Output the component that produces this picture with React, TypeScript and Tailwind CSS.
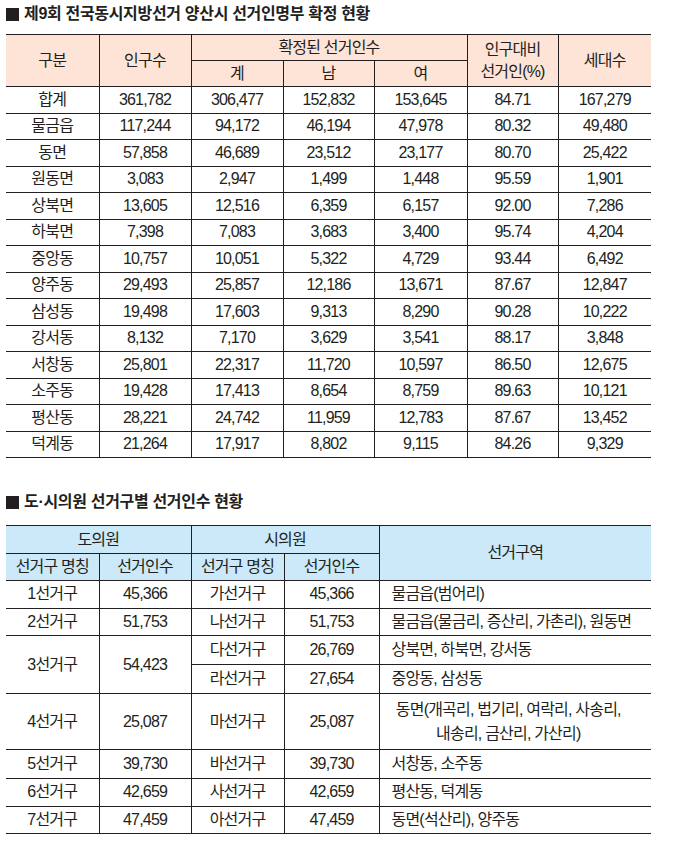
const rows1 = [
  ["합계", "361,782", "306,477", "152,832", "153,645", "84.71", "167,279"],
  ["물금읍", "117,244", "94,172", "46,194", "47,978", "80.32", "49,480"],
  ["동면", "57,858", "46,689", "23,512", "23,177", "80.70", "25,422"],
  ["원동면", "3,083", "2,947", "1,499", "1,448", "95.59", "1,901"],
  ["상북면", "13,605", "12,516", "6,359", "6,157", "92.00", "7,286"],
  ["하북면", "7,398", "7,083", "3,683", "3,400", "95.74", "4,204"],
  ["중앙동", "10,757", "10,051", "5,322", "4,729", "93.44", "6,492"],
  ["양주동", "29,493", "25,857", "12,186", "13,671", "87.67", "12,847"],
  ["삼성동", "19,498", "17,603", "9,313", "8,290", "90.28", "10,222"],
  ["강서동", "8,132", "7,170", "3,629", "3,541", "88.17", "3,848"],
  ["서창동", "25,801", "22,317", "11,720", "10,597", "86.50", "12,675"],
  ["소주동", "19,428", "17,413", "8,654", "8,759", "89.63", "10,121"],
  ["평산동", "28,221", "24,742", "11,959", "12,783", "87.67", "13,452"],
  ["덕계동", "21,264", "17,917", "8,802", "9,115", "84.26", "9,329"],
];

const font = "font-['Liberation_Sans','Noto_Sans_CJK_KR',sans-serif]";
const line = "border-[#231f20]";

function Title({ children }: { children: string }) {
  return (
    <h2 className="flex items-center gap-[5px] text-[16px] font-bold tracking-[-0.02em] text-[#231f20]">
      <span className="inline-block h-[13px] w-[13px] bg-[#231f20]" />
      {children}
    </h2>
  );
}

export default function App() {
  const cell = `border ${line} text-center px-0`;
  return (
    <div className={`${font} min-h-[858px] w-[677px] bg-white pl-[6px] pt-[6px] text-[16px] leading-none text-[#231f20] tracking-[-0.05em]`}>
      <Title>제9회 전국동시지방선거 양산시 선거인명부 확정 현황</Title>
      <table className="mt-[12px] w-[645px] table-fixed border-collapse">
        <colgroup>
          <col className="w-[93px]" />
          <col className="w-[92px]" />
          <col className="w-[92px]" />
          <col className="w-[91px]" />
          <col className="w-[93px]" />
          <col className="w-[91px]" />
          <col className="w-[93px]" />
        </colgroup>
        <thead className="bg-[#fde4d7]">
          <tr className="h-[26px]">
            <th rowSpan={2} className={`${cell} border-l-0 font-normal`}>구분</th>
            <th rowSpan={2} className={`${cell} font-normal`}>인구수</th>
            <th colSpan={3} className={`${cell} font-normal`}>확정된 선거인수</th>
            <th rowSpan={2} className={`${cell} font-normal leading-[22px]`}>
              인구대비
              <br />
              선거인(%)
            </th>
            <th rowSpan={2} className={`${cell} border-r-0 font-normal`}>세대수</th>
          </tr>
          <tr className="h-[26px]">
            <th className={`${cell} font-normal`}>계</th>
            <th className={`${cell} font-normal`}>남</th>
            <th className={`${cell} font-normal`}>여</th>
          </tr>
        </thead>
        <tbody>
          {rows1.map((r) => (
            <tr key={r[0]} className="h-[26.5px]">
              {r.map((v, i) => (
                <td
                  key={i}
                  className={`${cell} ${i === 0 ? "border-l-0" : ""} ${i === 6 ? "border-r-0" : ""}`}
                >
                  {v}
                </td>
              ))}
            </tr>
          ))}
        </tbody>
      </table>

      <div className="mt-[36px]">
        <Title>도·시의원 선거구별 선거인수 현황</Title>
      </div>
      <table className="mt-[15px] w-[645px] table-fixed border-collapse">
        <colgroup>
          <col className="w-[93px]" />
          <col className="w-[92px]" />
          <col className="w-[93px]" />
          <col className="w-[95px]" />
          <col className="w-[272px]" />
        </colgroup>
        <thead className="bg-[#cbe9f9]">
          <tr className="h-[28px]">
            <th colSpan={2} className={`${cell} border-l-0 font-normal`}>도의원</th>
            <th colSpan={2} className={`${cell} font-normal`}>시의원</th>
            <th rowSpan={2} className={`${cell} border-r-0 font-normal`}>선거구역</th>
          </tr>
          <tr className="h-[27px]">
            <th className={`${cell} border-l-0 font-normal`}>선거구 명칭</th>
            <th className={`${cell} font-normal`}>선거인수</th>
            <th className={`${cell} font-normal`}>선거구 명칭</th>
            <th className={`${cell} font-normal`}>선거인수</th>
          </tr>
        </thead>
        <tbody>
          <Row2 a="1선거구" b="45,366" c="가선거구" d="45,366" e="물금읍(범어리)" />
          <Row2 a="2선거구" b="51,753" c="나선거구" d="51,753" e="물금읍(물금리, 증산리, 가촌리), 원동면" />
          <tr className="h-[29px]">
            <td rowSpan={2} className={`${cell} border-l-0`}>3선거구</td>
            <td rowSpan={2} className={cell}>54,423</td>
            <td className={cell}>다선거구</td>
            <td className={cell}>26,769</td>
            <td className={`border ${line} border-r-0 pl-[12px] text-left`}>상북면, 하북면, 강서동</td>
          </tr>
          <tr className="h-[29px]">
            <td className={cell}>라선거구</td>
            <td className={cell}>27,654</td>
            <td className={`border ${line} border-r-0 pl-[12px] text-left`}>중앙동, 삼성동</td>
          </tr>
          <tr className="h-[56px]">
            <td className={`${cell} border-l-0`}>4선거구</td>
            <td className={cell}>25,087</td>
            <td className={cell}>마선거구</td>
            <td className={cell}>25,087</td>
            <td className={`border ${line} border-r-0 pr-[14px] text-center leading-[24px]`}>
              동면(개곡리, 법기리, 여락리, 사송리,
              <br />
              내송리, 금산리, 가산리)
            </td>
          </tr>
          <Row2 a="5선거구" b="39,730" c="바선거구" d="39,730" e="서창동, 소주동" h="h-[29px]" />
          <Row2 a="6선거구" b="42,659" c="사선거구" d="42,659" e="평산동, 덕계동" />
          <Row2 a="7선거구" b="47,459" c="아선거구" d="47,459" e="동면(석산리), 양주동" />
        </tbody>
      </table>
    </div>
  );
}

function Row2({ a, b, c, d, e, h = "h-[27.5px]" }: { a: string; b: string; c: string; d: string; e: string; h?: string }) {
  const cell = `border ${line} text-center`;
  return (
    <tr className={h}>
      <td className={`${cell} border-l-0`}>{a}</td>
      <td className={cell}>{b}</td>
      <td className={cell}>{c}</td>
      <td className={cell}>{d}</td>
      <td className={`border ${line} border-r-0 pl-[12px] text-left`}>{e}</td>
    </tr>
  );
}
